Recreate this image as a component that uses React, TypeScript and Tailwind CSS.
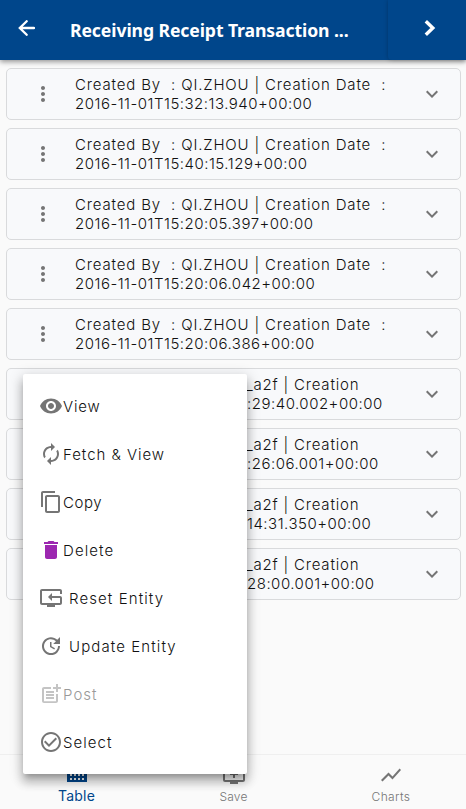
import React from "react";
import {
  MdAddToQueue, MdAutorenew, MdCheckCircleOutline, MdContentCopy, MdDelete,
  MdExpandMore, MdMoreVert, MdPostAdd, MdResetTv, MdShowChart, MdUpdate, MdVisibility,
} from "react-icons/md";

const zhou = "Created By  : QI.ZHOU | Creation Date  :";
const rows = [
  { a: zhou, b: "2016-11-01T15:32:13.940+00:00" },
  { a: zhou, b: "2016-11-01T15:40:15.129+00:00" },
  { a: zhou, b: "2016-11-01T15:20:05.397+00:00" },
  { a: zhou, b: "2016-11-01T15:20:06.042+00:00" },
  { a: zhou, b: "2016-11-01T15:20:06.386+00:00" },
];
const partial = [":29:40.002+00:00", ":26:06.001+00:00", "14:31.350+00:00", "28:00.001+00:00"];

const menu = [
  { t: "View", I: MdVisibility, c: "text-[#757575]", g: "tracking-[0.8px]" },
  { t: "Fetch & View", I: MdAutorenew, c: "text-[#757575]", g: "tracking-[0.95px]" },
  { t: "Copy", I: MdContentCopy, c: "text-[#757575]", g: "tracking-[0.6px]" },
  { t: "Delete", I: MdDelete, c: "text-[#9c27b0]", g: "tracking-[1.1px]" },
  { t: "Reset Entity", I: MdResetTv, c: "text-[#757575]", g: "pl-[6px] tracking-[1.1px]" },
  { t: "Update Entity", I: MdUpdate, c: "text-[#757575]", g: "pl-[6px] tracking-[1.1px]" },
  { t: "Post", I: MdPostAdd, c: "text-[#c4c4c4]", g: "tracking-[1.05px]" },
  { t: "Select", I: MdCheckCircleOutline, c: "text-[#757575]", g: "tracking-[1.05px]" },
];

function Card({ children, first }: { children: React.ReactNode; first: boolean }) {
  return (
    <div className="flex h-[52px] items-center rounded-[5px] border border-[#d9dadc] bg-[#f8f9fb]">
      <div className="flex w-[68px] shrink-0 pl-6">{first && <MdMoreVert size={24} className="text-[#757575]" />}</div>
      <div className="grow overflow-hidden whitespace-pre text-[15px] font-light leading-[19px] text-[#111]">{children}</div>
      <MdExpandMore size={24} className="mr-4 shrink-0 text-[#757575]" />
    </div>
  );
}

export default function App() {
  return (
    <div className="relative flex h-[809px] w-[466px] flex-col overflow-hidden bg-[#fafafa] font-['Inter','Liberation_Sans',sans-serif]">
      <header className="z-10 flex h-[60px] shrink-0 bg-[#00468b] text-white shadow-[0_2px_5px_rgba(0,0,0,0.4)]">
        <div className="flex w-[70px] items-center pb-1 pl-[18px]">
          <svg width="17" height="16" viewBox="0 0 17 16" fill="none" stroke="currentColor" strokeWidth="2.3" strokeLinecap="round"><path d="M16 8H2M8.7 1.2 1.8 8l6.9 6.8" /></svg>
        </div>
        <h1 className="w-[318px] whitespace-nowrap pt-[4px] font-['Noto_Sans',sans-serif] text-[17.6px] font-bold leading-[52px] tracking-[-0.09px]">Receiving Receipt Transaction ...</h1>
        <div className="flex grow items-center rounded-bl-[4px] pb-1 pl-9 shadow-[0_0_4px_rgba(0,0,0,0.25)]">
          <svg width="12" height="16" viewBox="0 0 12 16" fill="none" stroke="currentColor" strokeWidth="3.4"><path d="m1.8 1.3 7 6.7-7 6.7" /></svg>
        </div>
      </header>
      <main className="flex grow flex-col gap-2 pl-[6px] pr-[5px] pt-2">
        {rows.map((r) => (
          <Card key={r.b} first>
            <div className="tracking-[0.84px]">{r.a}</div>
            <div className="tracking-[0.5px]">{r.b}</div>
          </Card>
        ))}
        {partial.map((b) => (
          <Card key={b} first={false}>
            <div className="pl-[171px] tracking-[0.8px]">_a2f | Creation</div>
            <div className="pl-[172px] tracking-[0.5px]">{b}</div>
          </Card>
        ))}
      </main>
      <nav className="flex h-[55px] shrink-0 border-t border-[#efefef] text-[12px] leading-4 text-[#757575]">
        <div className="flex w-[153px] flex-col items-center pt-[9px] text-[14px] text-[#00468b]">
          <svg width="20" height="18" viewBox="0 0 20 18" fill="currentColor"><path d="M0 0h20v18H0z" /><path fill="#fafafa" d="M3 6h2v2H3zm4 0h2v2H7zm4 0h2v2h-2zm4 0h2v2h-2zM3 10h2v2H3zm4 0h2v2H7zm4 0h2v2h-2zm4 0h2v2h-2zM3 14h2v2H3zm4 0h2v2H7zm4 0h2v2h-2zm4 0h2v2h-2z" /></svg>
          <span className="mt-[6px] tracking-[0.2px]">Table</span>
        </div>
        <div className="flex w-[161px] flex-col items-center pt-2"><MdAddToQueue size={24} /><span className="mt-[2px] font-light tracking-[0.2px]">Save</span></div>
        <div className="flex grow flex-col items-center pl-[2px] pt-2"><MdShowChart size={24} /><span className="mt-[2px] font-light tracking-[0.4px]">Charts</span></div>
      </nav>
      <div className="absolute left-[23px] top-[374px] z-20 flex h-[400px] w-[224px] flex-col rounded-[2px] bg-white py-2 shadow-[0_5px_5px_-3px_rgba(0,0,0,0.2),0_8px_10px_1px_rgba(0,0,0,0.2),0_3px_14px_2px_rgba(0,0,0,0.14)]">
        {menu.map(({ t, I, c, g }) => (
          <div key={t} className="flex h-12 items-center pl-4">
            <I size={24} className={c} />
            <span className={`${g} whitespace-nowrap pt-[2px] text-[15px] font-light ${t === "Post" ? "text-[#999]" : "text-[#111]"}`}>{t}</span>
          </div>
        ))}
      </div>
    </div>
  );
}
